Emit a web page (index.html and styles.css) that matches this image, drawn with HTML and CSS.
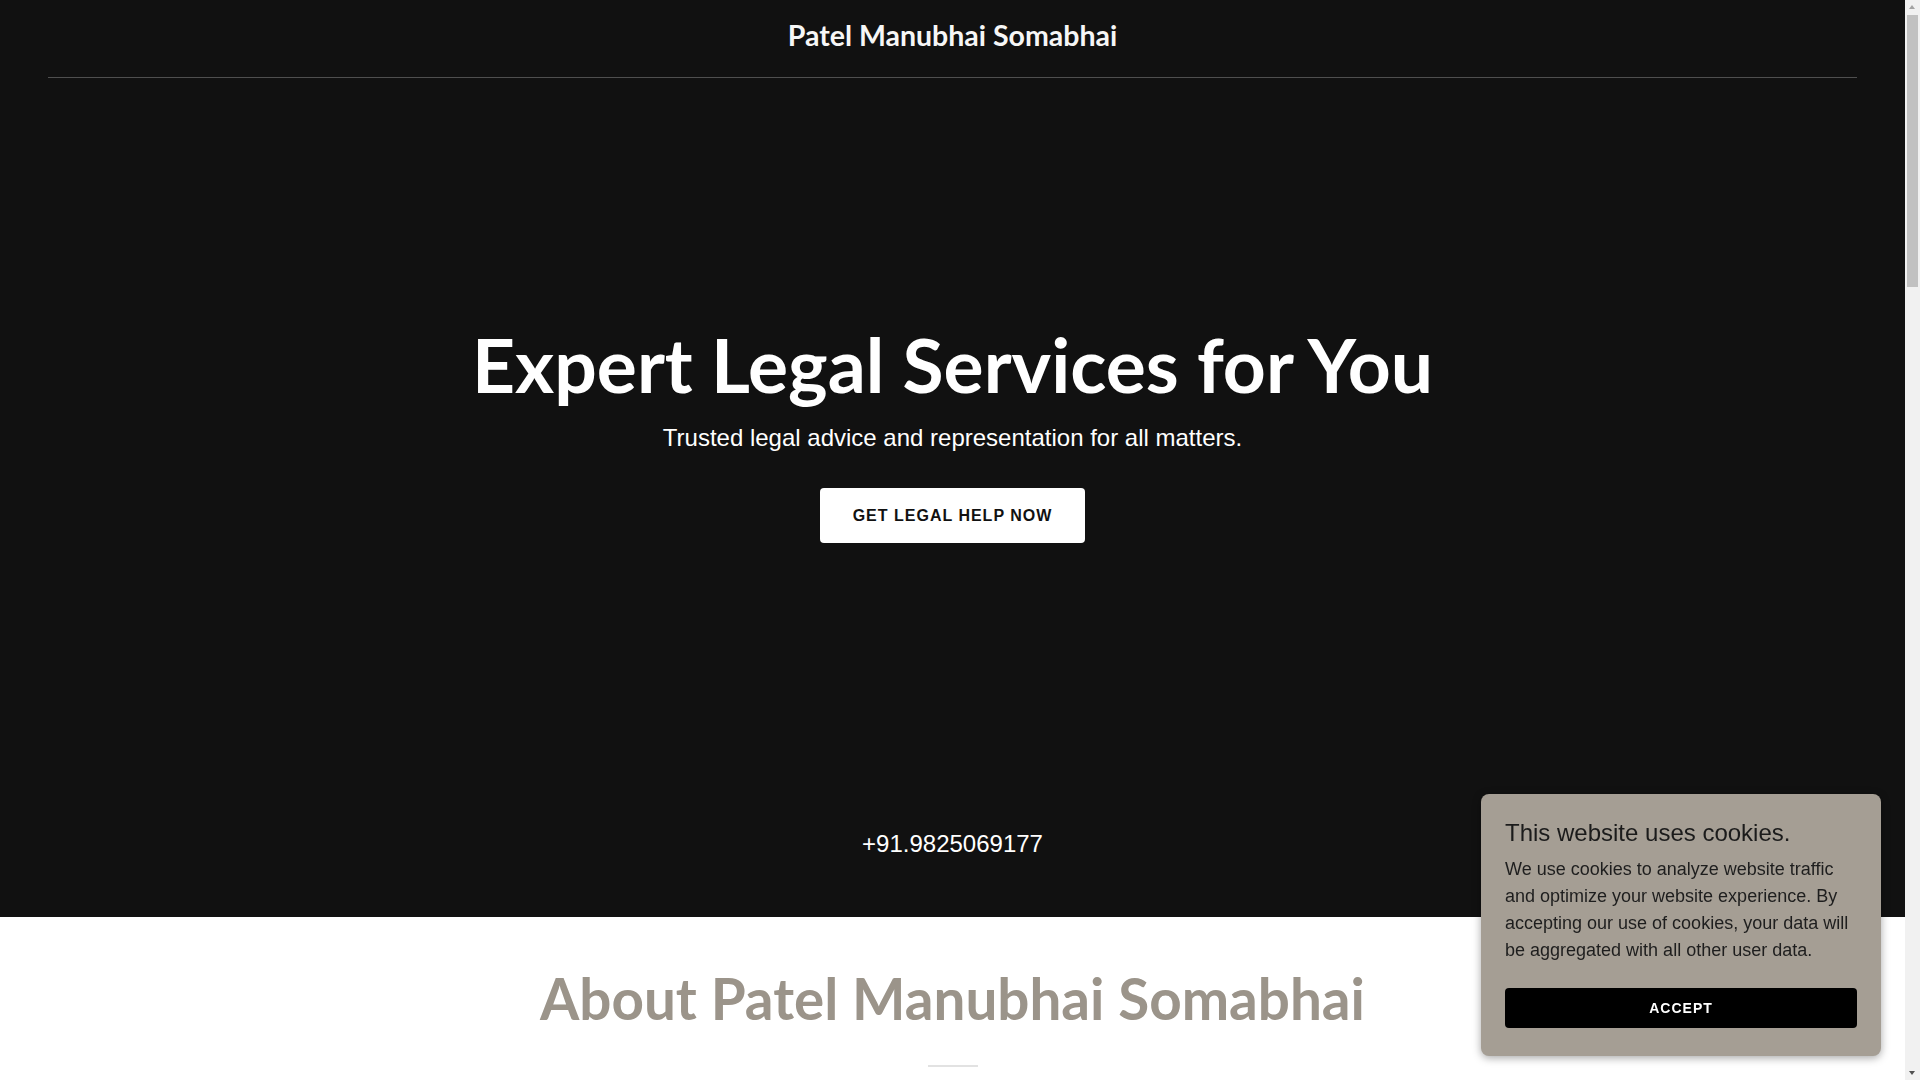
FILE: index.html
```html
<!DOCTYPE html>
<html lang="en">
<head>
<meta charset="utf-8">
<title>Patel Manubhai Somabhai</title>
<link rel="stylesheet" href="styles.css">
</head>
<body>
<div class="hero">
  <header class="topbar">
    <div class="topbar-inner">
      <div class="brand">Patel Manubhai Somabhai</div>
    </div>
  </header>
  <section class="hero-body">
    <h1 class="hero-title">Expert Legal Services for You</h1>
    <p class="hero-sub">Trusted legal advice and representation for all matters.</p>
    <a class="hero-btn" href="#">GET LEGAL HELP NOW</a>
  </section>
  <div class="hero-phone">+91.9825069177</div>
</div>

<section class="about">
  <h2 class="about-title">About Patel Manubhai Somabhai</h2>
  <div class="about-rule"></div>
  <p class="about-text">We are a dedicated legal practice providing expert advice and representation across a wide range of matters. Our commitment is to protect your rights and guide you through every step of the legal process.</p>
</section>

<section class="contact">
  <h2 class="about-title">Contact Us</h2>
  <div class="about-rule"></div>
  <p class="about-text">+91.9825069177</p>
</section>

<footer class="footer">
  <p>Copyright © 2024 Patel Manubhai Somabhai - All Rights Reserved.</p>
</footer>

<div class="cookie">
  <div class="cookie-title">This website uses cookies.</div>
  <p class="cookie-text">We use cookies to analyze website traffic and optimize your website experience. By accepting our use of cookies, your data will be aggregated with all other user data.</p>
  <a class="cookie-btn" href="#">ACCEPT</a>
</div>

<div class="scrollbar" aria-hidden="true">
  <span class="sb-arrow sb-up"></span>
  <span class="sb-thumb"></span>
  <span class="sb-arrow sb-down"></span>
</div>
</body>
</html>
```
FILE: styles.css
```css
html, body {
  margin: 0;
  padding: 0;
}
body {
  background: #ffffff;
  font-family: "Liberation Sans", Arial, sans-serif;
  color: #1b1b1b;
  margin-right: 15px;
}
.hero {
  background: #111111;
  color: #ffffff;
  padding-bottom: 55px;
}
.topbar {
  padding: 0 48px;
}
.topbar-inner {
  border-bottom: 1px solid #4f4f4f;
  padding: 18px 0 25px;
  text-align: center;
}
.brand {
  font-family: "Lato", sans-serif;
  font-weight: 700;
  font-size: 28.5px;
  line-height: 34px;
  color: #f6f6f6;
}
.hero-body {
  padding-top: 241px;
  display: flex;
  flex-direction: column;
  align-items: center;
  text-align: center;
}
.hero-title {
  margin: 0;
  font-family: "Lato", sans-serif;
  font-weight: 700;
  font-size: 75px;
  line-height: 91px;
  color: #ffffff;
}
.hero-sub {
  margin: 10px 0 0;
  font-size: 24px;
  line-height: 36px;
  color: #ffffff;
}
.hero-btn {
  margin-top: 32px;
  display: inline-block;
  background: #ffffff;
  color: #111111;
  text-decoration: none;
  font-weight: 700;
  font-size: 16px;
  letter-spacing: 1px;
  line-height: 19px;
  padding: 18px 33px;
  border-radius: 4px;
}
.hero-phone {
  margin-top: 283px;
  text-align: center;
  font-size: 24px;
  line-height: 36px;
  color: #ffffff;
}
.about {
  padding: 48px 48px 600px;
  text-align: center;
}
.about-title {
  margin: 0;
  font-family: "Lato", sans-serif;
  font-weight: 700;
  font-size: 56.6px;
  line-height: 67px;
  color: #9b948a;
}
.about-rule {
  width: 50px;
  height: 2px;
  background: #e2e2e2;
  margin: 33px auto 0;
}
.about-text {
  max-width: 900px;
  margin: 48px auto 0;
  font-size: 18px;
  line-height: 30px;
  color: #595959;
}
.contact {
  padding: 80px 48px 1500px;
  text-align: center;
  background: #f7f7f7;
}
.footer {
  padding: 60px 48px 400px;
  text-align: center;
  font-size: 16px;
  color: #595959;
}
.cookie {
  position: fixed;
  right: 39px;
  bottom: 24px;
  width: 352px;
  padding: 24px 24px 28px;
  background: #a59e94;
  border-radius: 8px;
  box-shadow: 0 2px 8px rgba(0, 0, 0, 0.35);
}
.cookie-title {
  font-size: 24px;
  line-height: 30px;
  color: #1b1b1b;
}
.cookie-text {
  margin: 8px 0 0;
  font-size: 18px;
  line-height: 27px;
  color: #1e1e1e;
}
.cookie-btn {
  display: block;
  margin-top: 24px;
  height: 40px;
  line-height: 40px;
  background: #000000;
  color: #ffffff;
  text-align: center;
  text-decoration: none;
  font-weight: 700;
  font-size: 14px;
  letter-spacing: 1px;
  border-radius: 4px;
}
.scrollbar {
  position: fixed;
  top: 0;
  right: 0;
  width: 15px;
  height: 100vh;
  background: #f1f1f1;
}
.sb-thumb {
  position: absolute;
  left: 2px;
  top: 15px;
  width: 11px;
  height: 272px;
  background: #c1c1c1;
}
.sb-arrow {
  position: absolute;
  left: 4px;
  width: 0;
  height: 0;
  border-left: 3.5px solid transparent;
  border-right: 3.5px solid transparent;
}
.sb-up {
  top: 5px;
  border-bottom: 4px solid #a3a3a3;
}
.sb-down {
  bottom: 5px;
  border-top: 4px solid #505050;
}
```
